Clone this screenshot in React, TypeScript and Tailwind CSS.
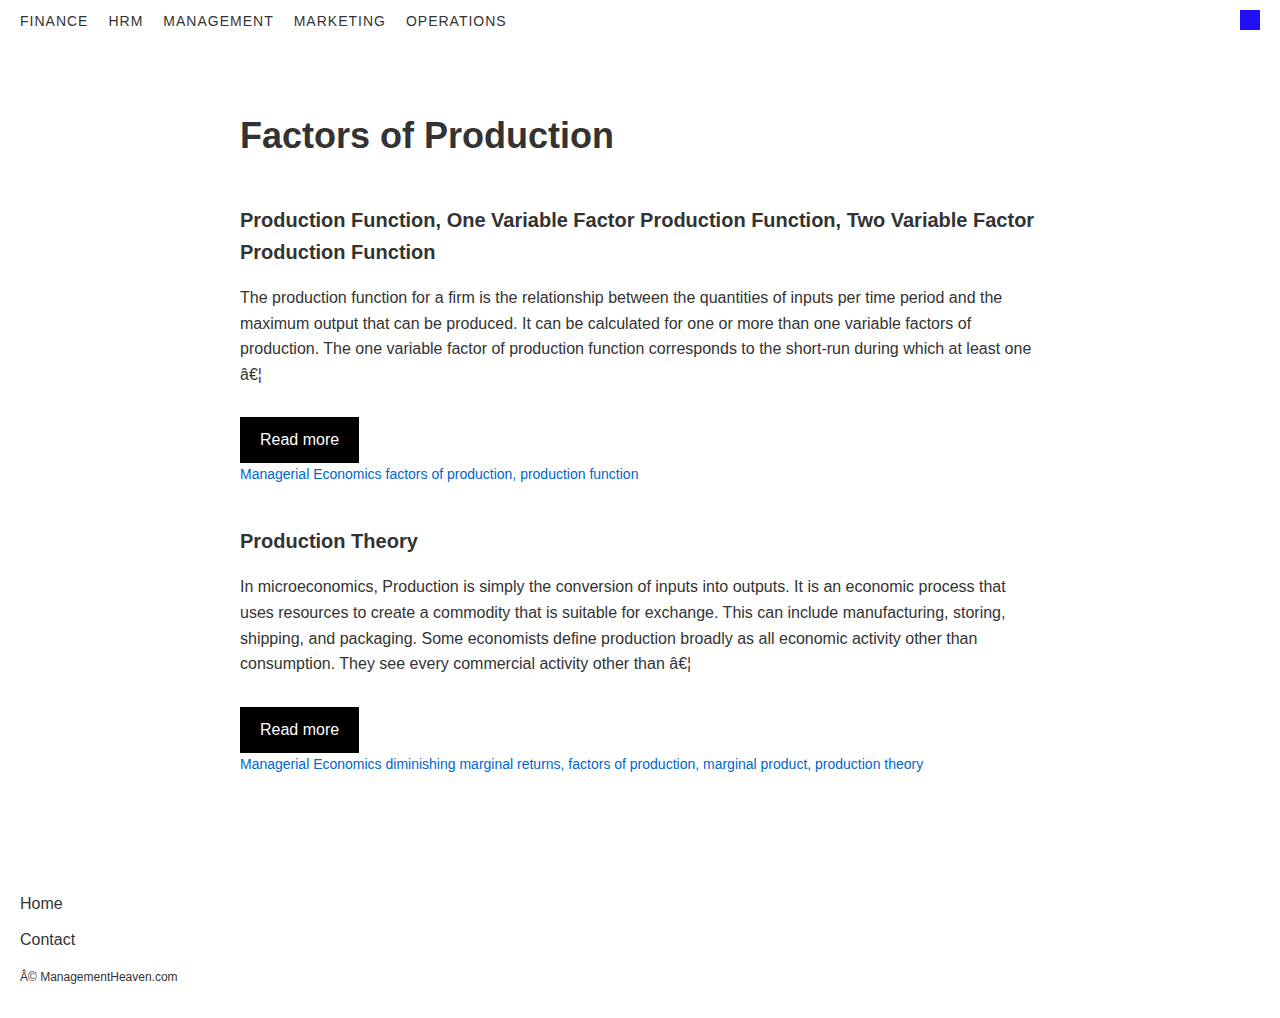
const nav = ["Finance", "HRM", "Management", "Marketing", "Operations"];

const posts = [
  {
    title:
      "Production Function, One Variable Factor Production Function, Two Variable Factor Production Function",
    excerpt:
      "The production function for a firm is the relationship between the quantities of inputs per time period and the maximum output that can be produced. It can be calculated for one or more than one variable factors of production. The one variable factor of production function corresponds to the short-run during which at least one â€¦",
    tags: "Managerial Economics factors of production, production function",
  },
  {
    title: "Production Theory",
    excerpt:
      "In microeconomics, Production is simply the conversion of inputs into outputs. It is an economic process that uses resources to create a commodity that is suitable for exchange. This can include manufacturing, storing, shipping, and packaging. Some economists define production broadly as all economic activity other than consumption. They see every commercial activity other than â€¦",
    tags:
      "Managerial Economics diminishing marginal returns, factors of production, marginal product, production theory",
  },
];

export default function App() {
  return (
    <div className="min-h-[1018px] bg-white text-[#333] font-['Liberation_Sans',Arial,sans-serif]">
      <header className="flex items-start justify-between px-5 pt-[10px] h-[40px]">
        <nav className="flex gap-5">
          {nav.map((item) => (
            <a key={item} href="#" className="text-[14px] leading-[22px] uppercase tracking-[1px] text-[#333]">
              {item}
            </a>
          ))}
        </nav>
        <div className="w-5 h-5 bg-[#2010ff]" />
      </header>

      <main className="w-[800px] mx-auto pt-[74px] pb-[69px]">
        <h1 className="text-[36px] font-bold leading-[44px] mb-[46px]">Factors of Production</h1>
        {posts.map((post, i) => (
          <article key={i} className="mb-[43px]">
            <h2 className="text-[20px] font-bold leading-[32px] mb-[17px]">{post.title}</h2>
            <p className="text-[16px] leading-[25.6px] mb-[30px]">{post.excerpt}</p>
            <a href="#" className="inline-block bg-black text-white text-[16px] px-5 h-[46px] leading-[46px]">
              Read more
            </a>
            <div className="text-[14px] leading-[16px] mt-[3px] text-[#0066cc]">{post.tags}</div>
          </article>
        ))}
      </main>

      <footer className="px-5 pt-[11px] pb-8">
        <div className="flex flex-col gap-[18px] text-[16px] leading-[18px]">
          <a href="#">Home</a>
          <a href="#">Contact</a>
        </div>
        <p className="text-[12px] leading-[14px] mt-[21px]">Â© ManagementHeaven.com</p>
      </footer>
    </div>
  );
}
